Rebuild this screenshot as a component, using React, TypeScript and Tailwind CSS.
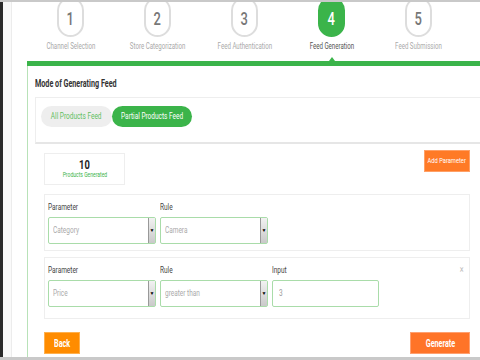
import React from 'react';

const steps = [
  { n: 1, label: 'Channel Selection' },
  { n: 2, label: 'Store Categorization' },
  { n: 3, label: 'Feed Authentication' },
  { n: 4, label: 'Feed Generation', active: true },
  { n: 5, label: 'Feed Submission' },
];

// the screenshot's type is condensed; squeeze the glyphs without touching layout boxes
function N({ children, center }: { children: React.ReactNode; center?: boolean }) {
  return (
    <span className={center ? 'inline-block whitespace-nowrap scale-x-[0.72] origin-center' : 'inline-block whitespace-nowrap scale-x-[0.72] origin-left'}>
      {children}
    </span>
  );
}

function Select({ value }: { value: string }) {
  return (
    <div className="flex h-[27px] w-[108px] border border-[#a9dca9] rounded-[2px] bg-white">
      <div className="flex-1 flex items-center pl-[4px] text-[9px] text-[#aaa]"><N>{value}</N></div>
      <div className="w-[7px] flex items-center justify-center bg-gradient-to-b from-[#f2f2f2] to-[#c9c9c9] border-l border-[#999]">
        <span className="text-[5px] leading-none text-black">▼</span>
      </div>
    </div>
  );
}

function Field({ label, children }: { label: string; children: React.ReactNode }) {
  return (
    <div className="flex flex-col gap-[5px]">
      <span className="text-[9px] leading-[10px] text-[#444]"><N>{label}</N></span>
      {children}
    </div>
  );
}

export default function App() {
  return (
    <div className="w-[480px] h-[360px] overflow-hidden bg-white flex flex-col font-['Roboto','Liberation_Sans',sans-serif]">
      <div className="h-[2px] bg-[#c9c9c9] shrink-0" />
      <div className="flex flex-1 min-h-0">
        <div className="w-[3px] bg-[#2b2b2b]" />
        <div className="w-[9px] bg-[#fafafa] border-r border-[#ececec]" />
        <div className="w-[15px]" />
        <div className="flex-1 flex flex-col min-w-0">
          {/* steps */}
          <div className="h-[59px] shrink-0 flex overflow-hidden">
            {steps.map((s) => (
              <div key={s.n} className="relative w-[87px] flex flex-col items-center">
                <div
                  className={
                    s.active
                      ? 'mt-[-5px] w-[27px] h-[40px] rounded-full bg-[#3bb44a] flex items-center justify-center text-white text-[18px] font-medium'
                      : 'mt-[-5px] w-[27px] h-[40px] rounded-full border-2 border-[#dddddd] flex items-center justify-center text-[#777] text-[18px] font-medium'
                  }
                >
                  <span className="pt-[3px]"><N center>{s.n}</N></span>
                </div>
                <span className={s.active ? 'mt-[4px] w-full flex justify-center text-[8.5px] leading-[10px] text-[#555]' : 'mt-[4px] w-full flex justify-center text-[8.5px] leading-[10px] text-[#aaa]'}>
                  <N center>{s.label}</N>
                </span>
                {s.active && (
                  <div className="absolute bottom-0 left-1/2 -translate-x-1/2 w-0 h-0 border-l-[3px] border-r-[3px] border-b-[4px] border-l-transparent border-r-transparent border-b-[#3bb44a]" />
                )}
              </div>
            ))}
          </div>
          <div className="h-[5px] bg-[#3bb44a] shrink-0" />

          {/* panel */}
          <div className="flex-1 min-h-0 border-l border-[#b8e2b8] pl-[7px] flex flex-col">
            <h2 className="pt-[12px] text-[10px] leading-[12px] font-bold text-[#333]"><N>Mode of Generating Feed</N></h2>
            <div className="mt-[7px] mr-[-10px] border-t border-l border-[#eeeeee] border-b-2 border-b-[#e6e6e6] h-[47px] pt-[8px] pl-[5px] flex items-start">
              <div className="flex">
                <button className="h-[21px] w-[71px] rounded-full bg-[#eeeeee] text-[9px] text-[#5fbf5f] flex items-center justify-center"><N center>All Products Feed</N></button>
                <button className="h-[21px] w-[80px] rounded-full bg-[#3bb44a] text-[9px] text-white flex items-center justify-center"><N center>Partial Products Feed</N></button>
              </div>
            </div>

            <div className="pl-[9px] pr-[10px] pt-[6px] flex flex-col">
              <div className="flex items-start justify-between">
                <div className="mt-[3px] w-[81px] h-[32px] border border-[#eeeeee] flex flex-col items-center justify-center">
                  <span className="text-[13px] leading-[13px] font-bold text-[#222]"><N center>10</N></span>
                  <span className="text-[7px] leading-[9px] text-[#3bb44a]"><N center>Products Generated</N></span>
                </div>
                <button className="w-[46px] h-[22px] bg-[#ff7a26] border border-[#ffa066] text-white text-[8px] flex items-center justify-center"><N center>Add Parameter</N></button>
              </div>

              <div className="mt-[9px] h-[57px] border border-[#eeeeee] pl-[3px] pt-[7px] flex gap-[4px]">
                <Field label="Parameter"><Select value="Category" /></Field>
                <Field label="Rule"><Select value="Camera" /></Field>
              </div>

              <div className="relative mt-[6px] h-[62px] border border-[#eeeeee] pl-[3px] pt-[7px] flex gap-[4px]">
                <Field label="Parameter"><Select value="Price" /></Field>
                <Field label="Rule"><Select value="greater than" /></Field>
                <Field label="Input">
                  <div className="h-[27px] w-[107px] border border-[#a9dca9] rounded-[2px] flex items-center pl-[6px] text-[9px] text-[#999]"><N>3</N></div>
                </Field>
                <span className="absolute right-[5px] top-[7px] text-[10px] leading-[10px] text-[#bbb]"><N center>×</N></span>
              </div>

              <div className="mt-[13px] flex justify-between">
                <button className="w-[36px] h-[22px] bg-[#ff8c00] border border-[#ffb04d] text-white text-[10px] font-bold flex items-center justify-center"><N center>Back</N></button>
                <button className="w-[60px] h-[22px] bg-[#ff7428] border border-[#ffa070] text-white text-[10px] font-bold flex items-center justify-center"><N center>Generate</N></button>
              </div>
            </div>
          </div>
        </div>
      </div>
      <div className="h-[3px] bg-[#c9c9c9] shrink-0" />
    </div>
  );
}
